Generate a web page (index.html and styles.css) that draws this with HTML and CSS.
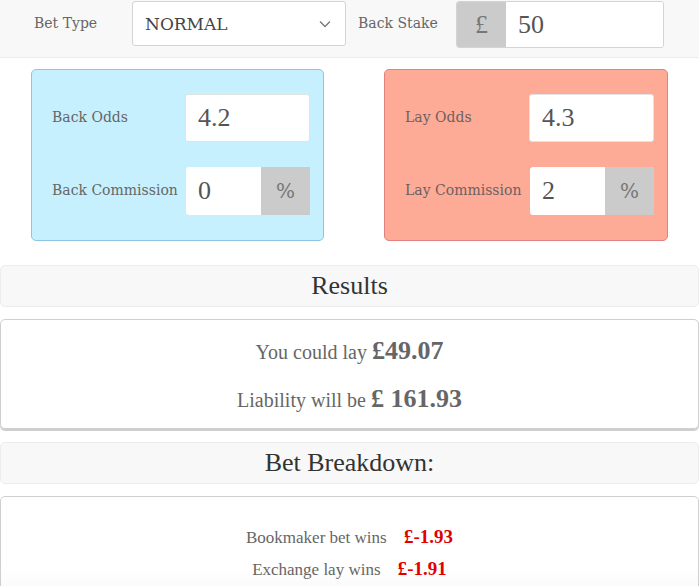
FILE: index.html
```html
<!DOCTYPE html>
<html>
<head>
<meta charset="utf-8">
<link rel="stylesheet" href="styles.css">
</head>
<body>
<div class="topbar">
  <label class="top-label">Bet Type</label>
  <div class="select">
    <span>NORMAL</span>
    <svg class="chev" width="12" height="8" viewBox="0 0 12 8"><path d="M1 1.5 L6 6.5 L11 1.5" fill="none" stroke="#777" stroke-width="1.3"/></svg>
  </div>
  <label class="top-label second">Back Stake</label>
  <div class="group stake">
    <span class="addon pound">£</span>
    <span class="input">50</span>
  </div>
</div>

<div class="cards">
  <div class="card back">
    <div class="row">
      <label class="card-label">Back Odds</label>
      <div class="input odds">4.2</div>
    </div>
    <div class="row">
      <label class="card-label">Back Commission</label>
      <div class="group comm">
        <span class="input">0</span>
        <span class="addon pct">%</span>
      </div>
    </div>
  </div>
  <div class="card lay">
    <div class="row">
      <label class="card-label">Lay Odds</label>
      <div class="input odds">4.3</div>
    </div>
    <div class="row">
      <label class="card-label">Lay Commission</label>
      <div class="group comm">
        <span class="input">2</span>
        <span class="addon pct">%</span>
      </div>
    </div>
  </div>
</div>

<div class="section-head first">Results</div>
<div class="panel results">
  <p class="line">You could lay <b>£49.07</b></p>
  <p class="line">Liability will be <b>£ 161.93</b></p>
</div>

<div class="section-head">Bet Breakdown:</div>
<div class="panel breakdown">
  <p class="bline">Bookmaker bet wins <b class="neg">£-1.93</b></p>
  <p class="bline">Exchange lay wins <b class="neg">£-1.91</b></p>
</div>
</body>
</html>
```

FILE: styles.css
```css
html, body {
  margin: 0;
  padding: 0;
  background: #fff;
}
body {
  width: 699px;
  overflow: hidden;
  font-family: "DejaVu Serif", serif;
  color: #666;
}

.topbar {
  display: flex;
  align-items: flex-start;
  padding-top: 1px;
  box-sizing: border-box;
  background: #f8f8f8;
  border-bottom: 1px solid #ededed;
  height: 58px;
}
.top-label {
  width: 98px;
  margin-left: 34px;
  font-size: 14px;
  line-height: 44px;
  color: #666;
}
.top-label.second {
  margin-left: 12px;
}
.select {
  width: 214px;
  height: 45px;
  box-sizing: border-box;
  border: 1px solid #d4d4d4;
  border-radius: 3px;
  background: #fff;
  display: flex;
  align-items: center;
  justify-content: space-between;
  padding: 0 14px 0 12px;
  font-size: 17px;
  color: #444;
}
.chev { display: block; }

.group {
  display: flex;
}
.stake {
  width: 208px;
  height: 47px;
  border-radius: 3px;
  overflow: hidden;
  border: 1px solid #d4d4d4;
  box-sizing: border-box;
}
.addon {
  background: #cbcbcb;
  color: #777;
  display: flex;
  align-items: center;
  justify-content: center;
}
.pound {
  width: 49px;
  font-family: "Liberation Serif", serif;
  font-size: 26px;
}
.input {
  background: #fff;
  display: flex;
  align-items: center;
  padding-left: 12px;
  box-sizing: border-box;
  font-family: "Liberation Serif", serif;
  font-size: 26px;
  color: #555;
  flex: 1;
}

.cards {
  display: flex;
  justify-content: space-between;
  padding: 0 31px;
  margin-top: 11px;
}
.card {
  box-sizing: border-box;
  height: 172px;
  border-radius: 5px;
  padding: 24px 13px 0 20px;
  display: flex;
  flex-direction: column;
  gap: 25px;
}
.card.back {
  width: 293px;
  background: #c6f0fd;
  border: 1px solid #8cc6e6;
}
.card.lay {
  width: 284px;
  background: #fdab97;
  border: 1px solid #e58080;
}
.row {
  display: flex;
  align-items: center;
  height: 48px;
}
.card-label {
  flex: 1;
  font-size: 14px;
  color: #666;
  padding-bottom: 3px;
}
.card.lay .card-label { color: #6e6060; }
.odds {
  flex: none;
  width: 125px;
  height: 48px;
  border: 1px solid #e2e2e2;
  border-radius: 3px;
}
.comm {
  width: 124px;
  height: 48px;
}
.comm .input {
  border-radius: 3px 0 0 3px;
}
.pct {
  width: 49px;
  font-family: "DejaVu Serif", serif;
  font-size: 20px;
  color: #777;
}

.section-head {
  margin-top: 13px;
  height: 42px;
  box-sizing: border-box;
  background: #f8f8f8;
  border: 1px solid #ececec;
  border-radius: 5px;
  text-align: center;
  font-family: "Liberation Serif", serif;
  font-size: 26px;
  line-height: 40px;
  color: #333;
}
.section-head.first {
  margin-top: 24px;
}
.panel {
  margin-top: 12px;
  border: 1px solid #cfcfcf;
  border-radius: 5px;
  box-sizing: border-box;
  text-align: center;
  font-family: "Liberation Serif", serif;
}
.results {
  height: 110px;
  padding-top: 17px;
  box-shadow: 0 2px 0 #cfcfcf;
}
.line {
  margin: 0;
  height: 30px;
  line-height: 30px;
  font-size: 20px;
  color: #666;
}
.line + .line { margin-top: 18px; }
.line b {
  font-size: 26px;
  line-height: 1;
  color: #666;
}
.breakdown {
  padding: 29px 0 40px;
  background: linear-gradient(#fff 55%, #f3f3f3);
}
.bline {
  margin: 0;
  height: 24px;
  line-height: 24px;
  font-size: 17px;
  color: #666;
}
.bline + .bline { margin-top: 8px; }
.neg {
  color: #e00000;
  font-size: 19px;
  line-height: 1;
  margin-left: 13px;
}
```
